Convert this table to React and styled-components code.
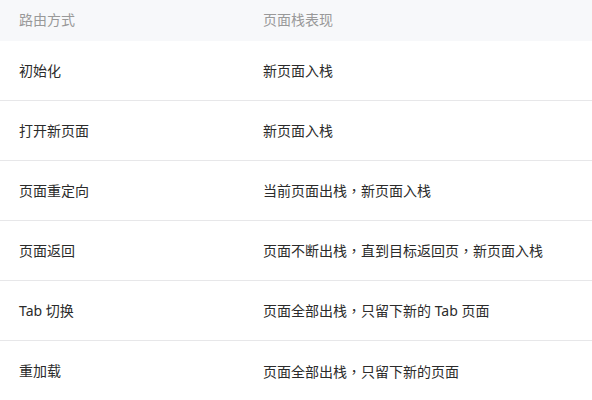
import React from "react";
import styled, { createGlobalStyle } from "styled-components";

const Global = createGlobalStyle`
  html, body { margin: 0; padding: 0; background: #fff; }
  body { font-family: "Noto Sans", "Noto Sans CJK SC", sans-serif; }
`;

const Table = styled.div`
  width: 592px;
  display: flex;
  flex-direction: column;
`;

const Row = styled.div`
  display: grid;
  grid-template-columns: 244px 1fr;
  align-items: center;
  padding-left: 19px;
  height: ${(p) => (p.$head ? "41px" : "60px")};
  padding-bottom: ${(p) => (p.$head ? "1px" : "0")};
  box-sizing: border-box;
  background: ${(p) => (p.$head ? "#f7f8fa" : "#fff")};
  border-bottom: ${(p) => (p.$head || p.$last ? "none" : "1px solid #e7e7e9")};
  color: ${(p) => (p.$head ? "#999" : "#2b2b2b")};
  font-size: 14px;
  line-height: 20px;
`;

const Cell = styled.div`
  white-space: nowrap;
`;

const Punct = styled.span`
  font-family: "Noto Sans CJK TC", sans-serif;
`;

const withPunct = (s) =>
  s.split("，").flatMap((part, i) =>
    i === 0 ? [part] : [<Punct key={i}>，</Punct>, part]
  );

const rows = [
  ["初始化", "新页面入栈"],
  ["打开新页面", "新页面入栈"],
  ["页面重定向", "当前页面出栈，新页面入栈"],
  ["页面返回", "页面不断出栈，直到目标返回页，新页面入栈"],
  ["Tab 切换", "页面全部出栈，只留下新的 Tab 页面"],
  ["重加载", "页面全部出栈，只留下新的页面"],
];

export default function App() {
  return (
    <>
      <Global />
      <Table>
        <Row $head>
          <Cell>路由方式</Cell>
          <Cell>页面栈表现</Cell>
        </Row>
        {rows.map(([a, b], i) => (
          <Row key={i} $last={i === rows.length - 1}>
            <Cell>{a}</Cell>
            <Cell>{withPunct(b)}</Cell>
          </Row>
        ))}
      </Table>
    </>
  );
}
